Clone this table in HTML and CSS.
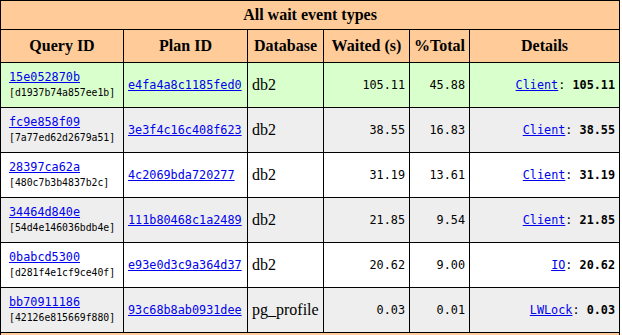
FILE: index.html
```html
<!DOCTYPE html>
<html>
<head>
<meta charset="utf-8">
<link rel="stylesheet" href="styles.css">
</head>
<body>
<table class="report">
  <colgroup>
    <col class="c-query"><col class="c-plan"><col class="c-db"><col class="c-wait"><col class="c-pct"><col class="c-det">
  </colgroup>
  <tr><th class="title" colspan="6">All wait event types</th></tr>
  <tr><th>Query ID</th><th>Plan ID</th><th>Database</th><th>Waited (s)</th><th>%Total</th><th>Details</th></tr>
  <tr class="hl">
    <td class="mono qid"><a href="#">15e052870b</a><br><small>[d1937b74a857ee1b]</small></td>
    <td class="mono"><a href="#">e4fa4a8c1185fed0</a></td>
    <td>db2</td>
    <td class="mono num">105.11</td>
    <td class="mono num">45.88</td>
    <td class="mono num"><a href="#">Client</a>: <b>105.11</b></td>
  </tr>
  <tr class="even">
    <td class="mono qid"><a href="#">fc9e858f09</a><br><small>[7a77ed62d2679a51]</small></td>
    <td class="mono"><a href="#">3e3f4c16c408f623</a></td>
    <td>db2</td>
    <td class="mono num">38.55</td>
    <td class="mono num">16.83</td>
    <td class="mono num"><a href="#">Client</a>: <b>38.55</b></td>
  </tr>
  <tr class="odd">
    <td class="mono qid"><a href="#">28397ca62a</a><br><small>[480c7b3b4837b2c]</small></td>
    <td class="mono"><a href="#">4c2069bda720277</a></td>
    <td>db2</td>
    <td class="mono num">31.19</td>
    <td class="mono num">13.61</td>
    <td class="mono num"><a href="#">Client</a>: <b>31.19</b></td>
  </tr>
  <tr class="even">
    <td class="mono qid"><a href="#">34464d840e</a><br><small>[54d4e146036bdb4e]</small></td>
    <td class="mono"><a href="#">111b80468c1a2489</a></td>
    <td>db2</td>
    <td class="mono num">21.85</td>
    <td class="mono num">9.54</td>
    <td class="mono num"><a href="#">Client</a>: <b>21.85</b></td>
  </tr>
  <tr class="odd">
    <td class="mono qid"><a href="#">0babcd5300</a><br><small>[d281f4e1cf9ce40f]</small></td>
    <td class="mono"><a href="#">e93e0d3c9a364d37</a></td>
    <td>db2</td>
    <td class="mono num">20.62</td>
    <td class="mono num">9.00</td>
    <td class="mono num"><a href="#">IO</a>: <b>20.62</b></td>
  </tr>
  <tr class="even">
    <td class="mono qid"><a href="#">bb70911186</a><br><small>[42126e815669f880]</small></td>
    <td class="mono"><a href="#">93c68b8ab0931dee</a></td>
    <td>pg_profile</td>
    <td class="mono num">0.03</td>
    <td class="mono num">0.01</td>
    <td class="mono num"><a href="#">LWLock</a>: <b>0.03</b></td>
  </tr>
  <tr><th class="foot" colspan="6">&nbsp;</th></tr>
</table>
</body>
</html>
```
FILE: styles.css
```css
html, body {
  margin: 0;
  padding: 0;
  background: #fff;
}
.report {
  border-collapse: collapse;
  table-layout: fixed;
  width: 620px;
  font-family: "Liberation Serif", serif;
  font-size: 16px;
  color: #000;
}
.c-query { width: 123px; }
.c-plan { width: 124px; }
.c-db { width: 76px; }
.c-wait { width: 86px; }
.c-pct { width: 60px; }
.c-det { width: 150px; }
.report th, .report td {
  border: 1px solid #000;
  padding: 0 4px;
}
.report th {
  background: #ffcc99;
  font-weight: bold;
  height: 32px;
}
.report th.title {
  height: 28px;
}
.report td {
  height: 44px;
  vertical-align: middle;
}
.report tr.hl td { background: #d9ffcc; }
.report tr.even td { background: #eeeeee; }
.report tr.odd td { background: #ffffff; }
.mono {
  font-family: "DejaVu Sans Mono", monospace;
  font-size: 11.8px;
  line-height: 15px;
}
.mono small {
  font-size: 9.8px;
}
.report td.qid {
  padding-left: 8px;
}
.num {
  text-align: right;
  padding-right: 5px;
}
.report a {
  color: #0000ee;
  text-decoration: underline;
}
```
